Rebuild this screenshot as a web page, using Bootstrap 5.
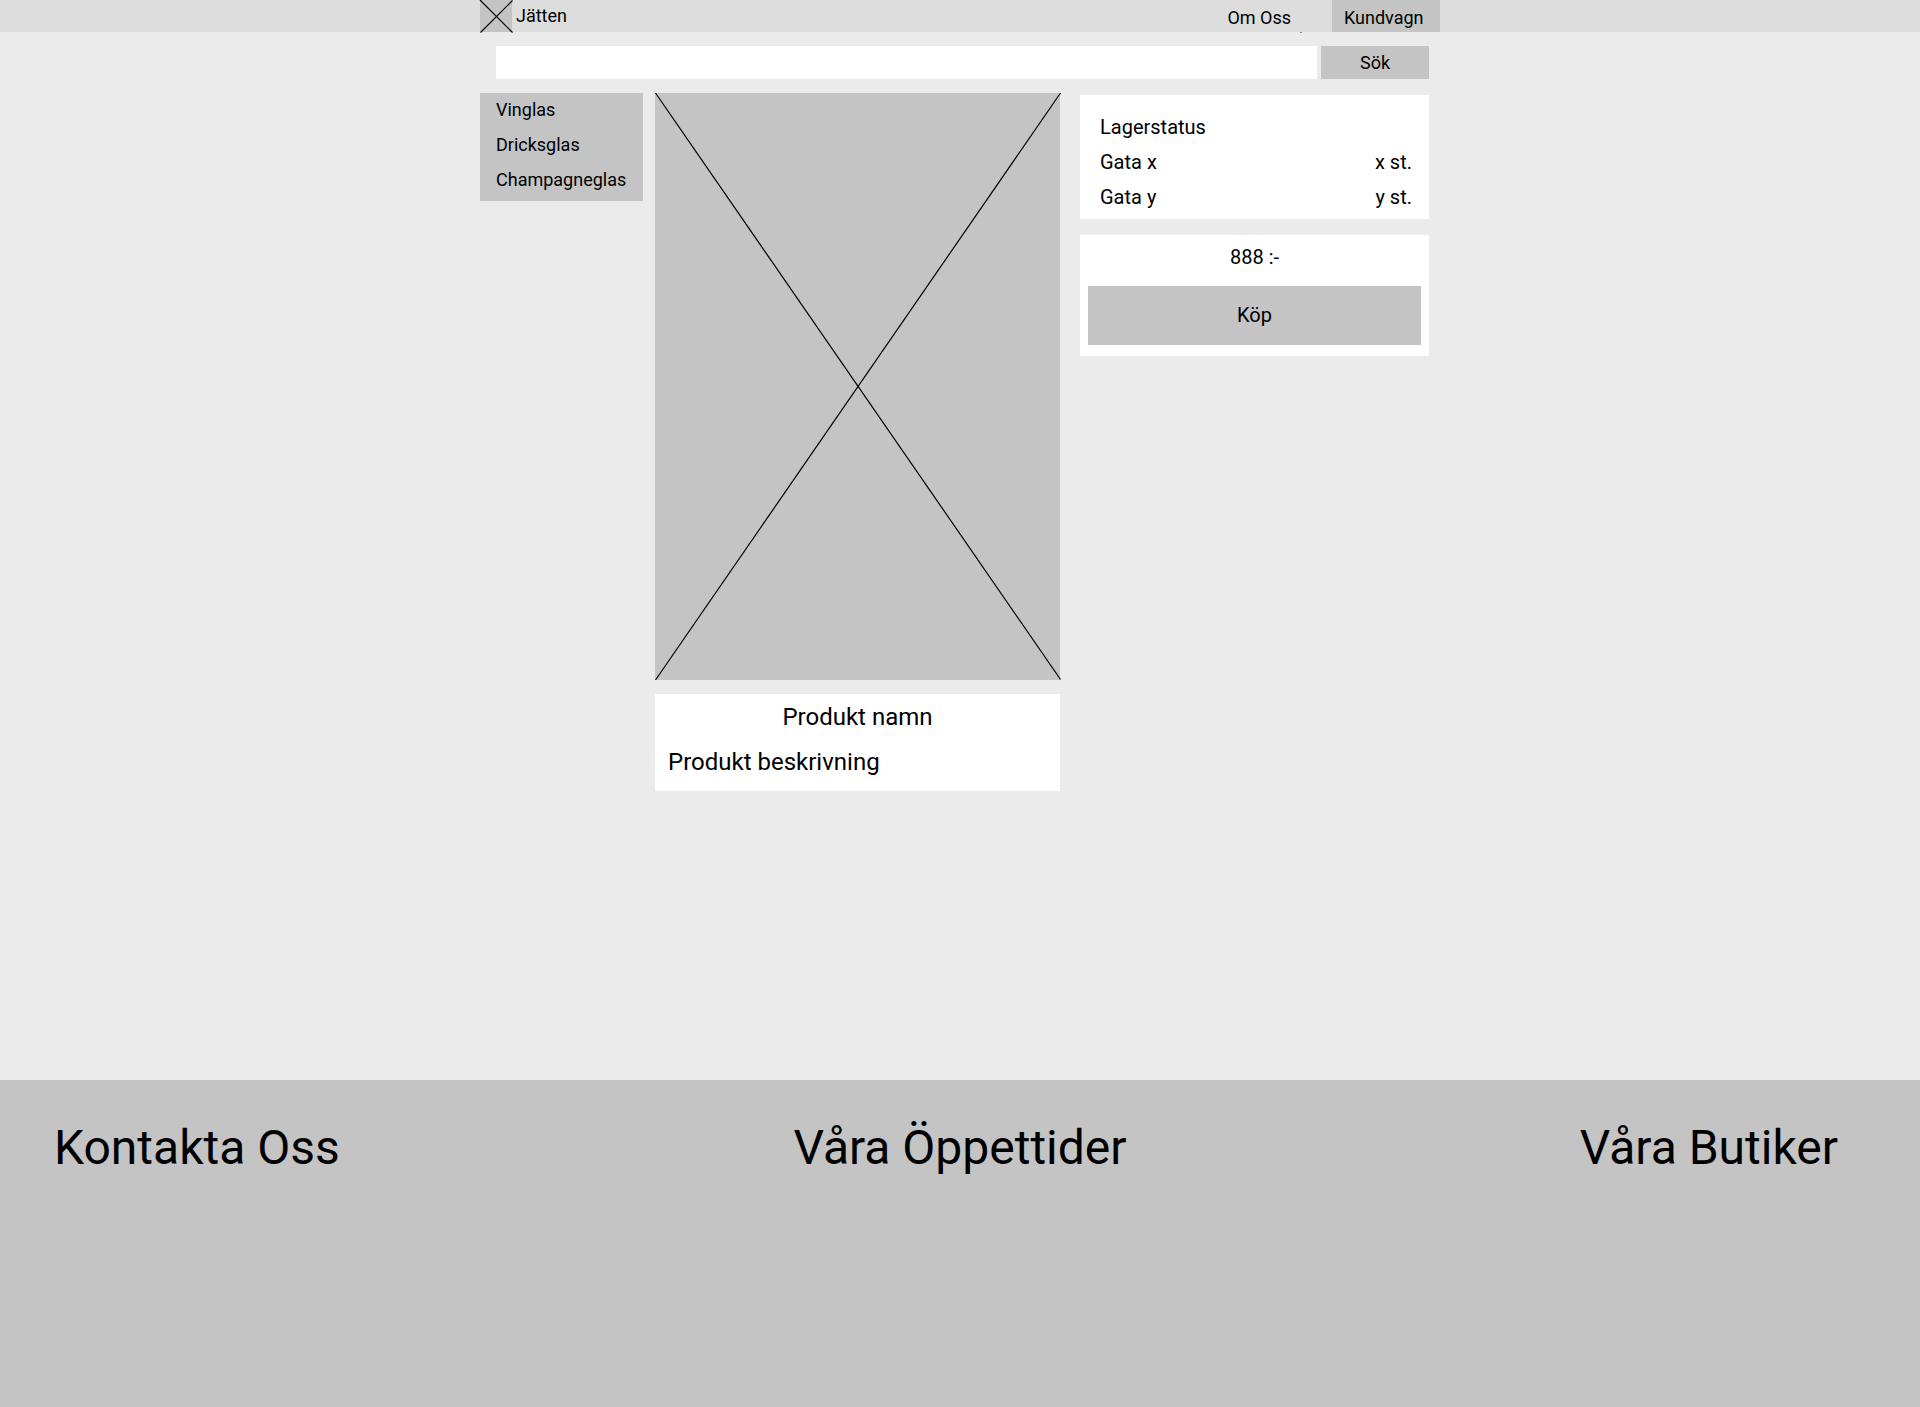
<!DOCTYPE html>
<html lang="sv">
<head>
<meta charset="utf-8">
<meta name="viewport" content="width=device-width, initial-scale=1">
<title>Jätten – Produkt</title>
<link href="https://cdn.jsdelivr.net/npm/bootstrap@5.3.0/dist/css/bootstrap.min.css" rel="stylesheet">
<style>
  body { font-family: Roboto, "Liberation Sans", sans-serif; font-size: 18px; line-height: 35px; color: #000; background: #ebebeb; }
  a { color: inherit; text-decoration: none; }
  .shell { width: 100%; max-width: 960px; margin: 0 auto; }
  .topbar { background: #ddd; line-height: 32px; }
  .fill { background: #c4c4c4; }
  .cross { display: block; overflow: visible; background: #c4c4c4; }
  .cross line { stroke: #000; stroke-width: 1.2; }
  .logo { width: 32px; height: 32px; }
  .links { gap: 41px; }
  .links a { padding-top: 4px; line-height: 28px; }
  .cart { position: relative; width: 108px; padding-left: 12px; }
  /* small tick between the two links, on the lower edge of the bar */
  .cart::before { content: ""; position: absolute; left: -32px; top: 32px; width: 2px; height: 1px; background: #888; }
  .search { padding: 14px 11px 14px 16px; gap: 4px; }
  .search input { height: 33px; min-width: 0; }
  .search button { width: 108px; height: 33px; line-height: 33px; }
  .search input, .search button, .buy { border: 0; border-radius: 0; color: #000; }
  .cats { width: 163px; padding: 0 0 3px 16px; margin-right: 12px; }
  .cats li { line-height: 33px; padding-bottom: 2px; }
  .product { flex: 0 1 405px; margin-right: 20px; }
  .photo { width: 100%; aspect-ratio: 405 / 587; margin-bottom: 14px; }
  .about { font-size: 24px; line-height: 45px; padding: 1px 13px 6px; }
  .about h1 { font-size: 24px; line-height: 45px; font-weight: 400; }
  .offer { flex: 0 1 349px; margin: 2px 11px 0 0; font-size: 20px; }
  .stock { padding: 15px 17px 4px 20px; margin-bottom: 16px; }
  .stock h2 { font-size: 20px; line-height: 35px; font-weight: 400; }
  .price { padding: 5px 8px 11px; }
  .buy { height: 59px; margin-top: 11px; }
  .foot { min-height: 327px; padding: 40px 82px 40px 54px; }
  .foot h2 { font-size: 48px; line-height: 56px; font-weight: 400; }
  .foot .mid { padding-left: 28px; }
</style>
</head>
<body class="d-flex flex-column min-vh-100">
  <header class="topbar">
    <nav class="shell d-flex justify-content-between" aria-label="Huvudmeny">
      <a href="#" class="d-flex gap-1">
        <svg class="cross logo" viewBox="0 0 32 32" aria-hidden="true"><line x1="0" y1="0" x2="32.5" y2="32.5"/><line x1="0.5" y1="32.5" x2="32.5" y2="0.5"/></svg>
        Jätten
      </a>
      <div class="d-flex links">
        <a href="#">Om Oss</a>
        <a href="#" class="fill cart">Kundvagn</a>
      </div>
    </nav>
  </header>

  <main class="flex-grow-1">
    <div class="shell">
      <form class="search d-flex" role="search">
        <input type="search" class="flex-grow-1 bg-white px-2" aria-label="Sök produkter">
        <button type="button" class="fill p-0">Sök</button>
      </form>
      <div class="d-flex flex-wrap flex-md-nowrap align-items-start">
        <ul class="cats fill list-unstyled mb-0 flex-shrink-0">
          <li><a href="#">Vinglas</a></li>
          <li><a href="#">Dricksglas</a></li>
          <li><a href="#">Champagneglas</a></li>
        </ul>
        <article class="product">
          <svg class="cross photo" viewBox="0 0 405 587" role="img" aria-label="Produktbild"><line x1="0.5" y1="0" x2="405.5" y2="586.5"/><line x1="0.5" y1="587" x2="405.5" y2="0"/></svg>
          <div class="about bg-white">
            <h1 class="text-center m-0">Produkt namn</h1>
            <p class="m-0">Produkt beskrivning</p>
          </div>
        </article>
        <aside class="offer">
          <section class="stock bg-white">
            <h2 class="m-0">Lagerstatus</h2>
            <div class="d-flex justify-content-between"><span>Gata x</span><span>x st.</span></div>
            <div class="d-flex justify-content-between"><span>Gata y</span><span>y st.</span></div>
          </section>
          <section class="price bg-white text-center">
            <div>888 :-</div>
            <button type="button" class="buy fill d-block w-100">Köp</button>
          </section>
        </aside>
      </div>
    </div>
  </main>

  <footer class="foot fill">
    <div class="row g-0">
      <div class="col-lg-4"><h2 class="m-0">Kontakta Oss</h2></div>
      <div class="col-lg-4 mid text-lg-center"><h2 class="m-0">Våra Öppettider</h2></div>
      <div class="col-lg-4 text-lg-end"><h2 class="m-0">Våra Butiker</h2></div>
    </div>
  </footer>
<script src="https://cdn.jsdelivr.net/npm/bootstrap@5.3.0/dist/js/bootstrap.bundle.min.js"></script>
</body>
</html>
